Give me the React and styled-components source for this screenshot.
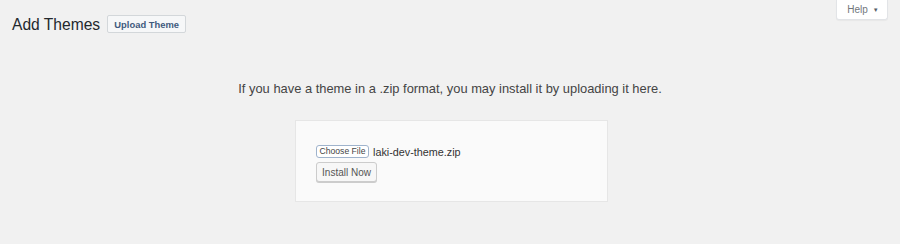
import React from "react";
import styled, { createGlobalStyle } from "styled-components";

const Global = createGlobalStyle`
  html, body { margin: 0; padding: 0; background: #f1f1f1; }
  body { font-family: "Liberation Sans", Arial, sans-serif; color: #23282d; }
`;

const Page = styled.div`
  width: 900px;
  height: 244px;
  background: #f1f1f1;
  display: flex;
  flex-direction: column;
`;

const TopBar = styled.div`
  display: flex;
  justify-content: space-between;
  align-items: flex-start;
`;

const TitleRow = styled.div`
  display: flex;
  align-items: center;
  gap: 7px;
  margin: 15px 0 0 12px;
  height: 18px;
`;

const Title = styled.h1`
  margin: 0;
  font-size: 15.6px;
  font-weight: 400;
  line-height: 18px;
  color: #23282d;
  position: relative;
  top: 1px;
`;

const ActionButton = styled.button`
  height: 18px;
  width: 79px;
  padding: 0;
  border: 1px solid #d3d7da;
  border-radius: 2px;
  background: #f6f7f8;
  color: #3f5a7d;
  font-family: "Liberation Sans", Arial, sans-serif;
  font-size: 9.4px;
  font-weight: 700;
  cursor: pointer;
`;

const HelpTab = styled.button`
  margin-right: 12px;
  width: 52px;
  height: 20px;
  padding: 0 0 0 2px;
  border: 1px solid #e2e4e7;
  border-top: none;
  border-radius: 0 0 3px 3px;
  background: #ffffff;
  box-shadow: 0 1px 1px rgba(0, 0, 0, 0.04);
  color: #72777c;
  font-family: "Liberation Sans", Arial, sans-serif;
  font-size: 10px;
  display: flex;
  align-items: center;
  justify-content: center;
  gap: 5px;
`;

const Caret = styled.span`
  font-size: 6px;
  color: #555d66;
  line-height: 1;
`;

const Help = styled.p`
  margin: 47px 0 0;
  text-align: center;
  font-size: 12.9px;
  line-height: 18px;
  color: #444444;
`;

const FormBox = styled.form`
  align-self: center;
  margin: 22px 0 0 3px;
  width: 313px;
  box-sizing: border-box;
  padding: 24px 20px 19px;
  background: #fafafa;
  border: 1px solid #e6e6e6;
  display: flex;
  flex-direction: column;
  align-items: flex-start;
  gap: 4px;
`;

const FileRow = styled.div`
  display: flex;
  align-items: center;
  gap: 4px;
  height: 13px;
`;

const ChooseButton = styled.button`
  width: 53px;
  height: 13px;
  padding: 0;
  border: 1px solid #9fb3cc;
  border-radius: 3px;
  background: #ffffff;
  color: #444;
  font-family: "Liberation Sans", Arial, sans-serif;
  font-size: 8.6px;
  line-height: 11px;
`;

const FileName = styled.span`
  font-size: 10.8px;
  color: #333;
`;

const InstallButton = styled.button`
  width: 61px;
  height: 20px;
  padding: 0;
  border: 1px solid #cccccc;
  border-radius: 3px;
  background: #f7f7f7;
  box-shadow: 0 1px 0 #cccccc;
  color: #555;
  font-family: "Liberation Sans", Arial, sans-serif;
  font-size: 10px;
`;

export default function App() {
  return (
    <>
      <Global />
      <Page>
        <TopBar>
          <TitleRow>
            <Title>Add Themes</Title>
            <ActionButton type="button">Upload Theme</ActionButton>
          </TitleRow>
          <HelpTab type="button">
            Help <Caret>▼</Caret>
          </HelpTab>
        </TopBar>
        <Help>If you have a theme in a .zip format, you may install it by uploading it here.</Help>
        <FormBox onSubmit={(e) => e.preventDefault()}>
          <FileRow>
            <ChooseButton type="button">Choose File</ChooseButton>
            <FileName>laki-dev-theme.zip</FileName>
          </FileRow>
          <InstallButton type="submit">Install Now</InstallButton>
        </FormBox>
      </Page>
    </>
  );
}
